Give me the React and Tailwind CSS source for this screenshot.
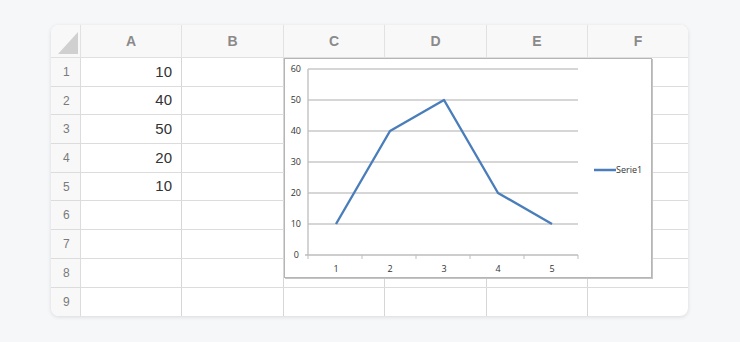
import React from "react";

const cols = ["A", "B", "C", "D", "E", "F"];
const values = { 1: "10", 2: "40", 3: "50", 4: "20", 5: "10" };
const rows = [1, 2, 3, 4, 5, 6, 7, 8, 9];

function Chart() {
  const yTicks = [60, 50, 40, 30, 20, 10, 0];
  const yFor = (v) => 196 - (v / 10) * 31;
  const data = [10, 40, 50, 20, 10];
  const xs = [51, 105, 159, 213, 267];
  const pts = data.map((v, i) => `${xs[i]},${yFor(v)}`).join(" ");
  return (
    <div className="absolute left-[233px] top-[33px] w-[368px] h-[220px] bg-white border border-[#b5b5b5] shadow-[1px_1px_0_#c4c4c4]">
      <svg width="366" height="218" className="block" style={{ fontFamily: '"Open Sans", "Liberation Sans", sans-serif' }}>
        {yTicks.map((v) => (
          <g key={v}>
            {v !== 0 && <line x1="23" x2="293" y1={yFor(v)} y2={yFor(v)} stroke="#c8c8c8" strokeWidth="1.3" />}
            <text x={v === 0 ? 14 : 16} y={yFor(v) + 3} fontSize="9" fill="#333" textAnchor="end">{v}</text>
          </g>
        ))}
        <line x1="23" x2="23" y1="10" y2="196" stroke="#bdbdbd" strokeWidth="1.3" />
        <line x1="20" x2="293" y1="196" y2="196" stroke="#bdbdbd" strokeWidth="1.3" />
        {[23, 77, 131, 185, 239, 293].map((x) => (
          <line key={x} x1={x} x2={x} y1="196" y2="200" stroke="#bdbdbd" strokeWidth="1" />
        ))}
        {xs.map((x, i) => (
          <text key={x} x={x} y="213" fontSize="9" fill="#333" textAnchor="middle">{i + 1}</text>
        ))}
        <polyline points={pts} fill="none" stroke="#4a7ebb" strokeWidth="2.4" strokeLinejoin="round" />
        <line x1="309" x2="331" y1="111" y2="111" stroke="#4a7ebb" strokeWidth="2.4" />
        <text x="331" y="114" fontSize="9" fill="#333">Serie1</text>
      </svg>
    </div>
  );
}

const gridCols = "grid grid-cols-[30px_101px_102px_101px_102px_101px_100px]";

export default function App() {
  return (
    <div className="w-[740px] h-[342px] bg-[#f6f7f9] pt-[25px] pl-[51px]" style={{ fontFamily: '"Liberation Sans", Arial, sans-serif' }}>
      <div className="relative w-[637px] rounded-[8px] bg-white shadow-[0_1px_4px_rgba(0,0,0,0.12)] overflow-hidden">
        <div className={`${gridCols} h-[33px] bg-[#f8f8f8] border-b border-[#e0e0e0]`}>
          <div className="relative border-r border-[#e2e2e2]">
            <svg width="30" height="33" className="block">
              <polygon points="27,7 27,29 7,29" fill="#d0d0d0" />
            </svg>
          </div>
          {cols.map((c, i) => (
            <div key={c} className={`flex items-center justify-center text-[14px] text-[#8a8a8a] font-semibold ${i < 5 ? "border-r border-[#e2e2e2]" : ""}`}>
              {c}
            </div>
          ))}
        </div>
        {rows.map((r, ri) => (
          <div key={r} className={`${gridCols} h-[28.7px] ${ri < 8 ? "border-b border-[#dcdcdc]" : ""}`}>
            <div className="flex items-center pl-[12px] text-[12px] text-[#7a7a7a] bg-[#f8f8f8] border-r border-[#dcdcdc]">{r}</div>
            {cols.map((c, i) => (
              <div key={c} className={`flex items-center justify-end pr-[9px] text-[15px] text-[#333] ${i < 5 ? "border-r border-[#d6d6d6]" : ""}`}>
                {c === "A" ? values[r] : ""}
              </div>
            ))}
          </div>
        ))}
        <Chart />
      </div>
    </div>
  );
}
